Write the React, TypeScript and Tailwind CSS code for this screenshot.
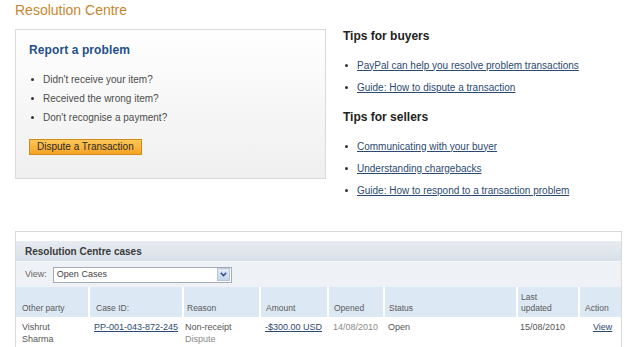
import React from "react";

const Bullet = () => (
  <span className="inline-block w-[3px] h-[3px] rounded-full bg-[#333] shrink-0" />
);

export default function App() {
  const problems = [
    "Didn't receive your item?",
    "Received the wrong item?",
    "Don't recognise a payment?",
  ];
  const buyers = [
    "PayPal can help you resolve problem transactions",
    "Guide: How to dispute a transaction",
  ];
  const sellers = [
    "Communicating with your buyer",
    "Understanding chargebacks",
    "Guide: How to respond to a transaction problem",
  ];
  const cols = "grid grid-cols-[72px_94px_77px_68px_56px_133px_62px_43px]";
  return (
    <div className="w-[640px] h-[347px] overflow-hidden bg-white font-['Liberation_Sans',Arial,sans-serif] text-[#4a4a4a]">
      <div className="pl-[15px] pt-[2px] text-[14px] leading-[17px] text-[#c8862f]">
        Resolution Centre
      </div>
      <div className="flex items-start mt-[10px] h-[172px]">
        <div className="ml-[15px] w-[311px] h-[150px] border border-[#d9d9d9] bg-gradient-to-b from-white to-[#efefef] pl-[13px] pt-[13px]">
          <div className="text-[12px] leading-[14px] font-bold text-[#24508a] tracking-[0.1px]">
            Report a problem
          </div>
          <ul className="mt-[13px]">
            {problems.map((p) => (
              <li key={p} className="flex items-center h-[19px] text-[10px] text-[#4d4d4d]">
                <span className="ml-[2px] mr-[9px] flex"><Bullet /></span>
                {p}
              </li>
            ))}
          </ul>
          <button className="mt-[12px] h-[16px] px-[7px] border border-[#d18a1c] bg-gradient-to-b from-[#fdc858] to-[#f5a21f] text-[10px] leading-[14px] text-[#2b2b2b]">
            Dispute a Transaction
          </button>
        </div>
        <div className="ml-[17px]">
          <div className="text-[12px] leading-[14px] font-bold text-[#222]">Tips for buyers</div>
          <ul className="mt-[11px]">
            {buyers.map((b) => (
              <li key={b} className="flex items-center h-[22px] text-[10px]">
                <span className="ml-[2px] mr-[9px] flex"><Bullet /></span>
                <a className="underline text-[#2c4a6f]">{b}</a>
              </li>
            ))}
          </ul>
          <div className="mt-[12px] text-[12px] leading-[14px] font-bold text-[#222]">Tips for sellers</div>
          <ul className="mt-[11px]">
            {sellers.map((b) => (
              <li key={b} className="flex items-center h-[22px] text-[10px]">
                <span className="ml-[2px] mr-[9px] flex"><Bullet /></span>
                <a className="underline text-[#2c4a6f]">{b}</a>
              </li>
            ))}
          </ul>
        </div>
      </div>
      <div className="mt-[30px] ml-[15px] w-[607px] border border-[#d9d9d9] bg-white">
        <div className="h-[9px] bg-white" />
        <div className="h-[21px] flex items-center pl-[9px] bg-gradient-to-b from-[#e7ecf1] to-[#d8e0e8] border-b border-[#f4f6f8] text-[10px] font-bold text-[#3a3a3a]">
          Resolution Centre cases
        </div>
        <div className="h-[25px] flex items-center pl-[9px] bg-[#eef1f5] text-[9px] text-[#666]">
          <span>View:</span>
          <div className="ml-[6px] w-[179px] h-[16px] border border-[#a3acb8] bg-white flex items-center justify-between">
            <span className="pl-[3px] text-[9px] text-[#444]">Open Cases</span>
            <span className="w-[13px] h-[13px] mr-[1px] bg-gradient-to-b from-[#e4ecf7] to-[#c5d5ea] border border-[#b5c4d9] flex items-center justify-center">
              <svg width="7" height="5" viewBox="0 0 7 5">
                <path d="M0.8 0.8 L3.5 3.6 L6.2 0.8" fill="none" stroke="#2d4f8a" strokeWidth="1.5" />
              </svg>
            </span>
          </div>
        </div>
        <div className={`${cols} h-[30px] bg-[#dce8f4] text-[8.5px] leading-[11px] text-[#5a5a5a]`}>
          <div className="flex items-end pb-[3px] pl-[6px]">Other party</div>
          <div className="flex items-end pb-[3px] pl-[6px] border-l-2 border-white">Case ID:</div>
          <div className="flex items-end pb-[3px] pl-[3px] border-l-2 border-white">Reason</div>
          <div className="flex items-end pb-[3px] pl-[5px] border-l-2 border-white">Amount</div>
          <div className="flex items-end pb-[3px] pl-[5px] border-l-2 border-white">Opened</div>
          <div className="flex items-end pb-[3px] pl-[4px] border-l-2 border-white">Status</div>
          <div className="flex items-end pb-[3px] pl-[3px] border-l-2 border-white">Last<br />updated</div>
          <div className="flex items-end pb-[3px] pl-[5px] border-l-2 border-white">Action</div>
        </div>
        <div className={`${cols} h-[40px] pt-[4px] text-[9px] leading-[12px] text-[#555]`}>
          <div className="pl-[6px]">Vishrut<br />Sharma</div>
          <div className="pl-[6px]"><a className="underline text-[#2c4a6f]">PP-001-043-872-245</a></div>
          <div className="pl-[3px]">Non-receipt<br /><span className="text-[#8a8a8a]">Dispute</span></div>
          <div className="pl-[6px]"><a className="underline text-[#2c4a6f]">-$300.00 USD</a></div>
          <div className="pl-[6px] text-[#8a8a8a]">14/08/2010</div>
          <div className="pl-[5px]">Open</div>
          <div className="pl-[4px]">15/08/2010</div>
          <div className="pl-[15px]"><a className="underline text-[#2c4a6f]">View</a></div>
        </div>
      </div>
    </div>
  );
}
